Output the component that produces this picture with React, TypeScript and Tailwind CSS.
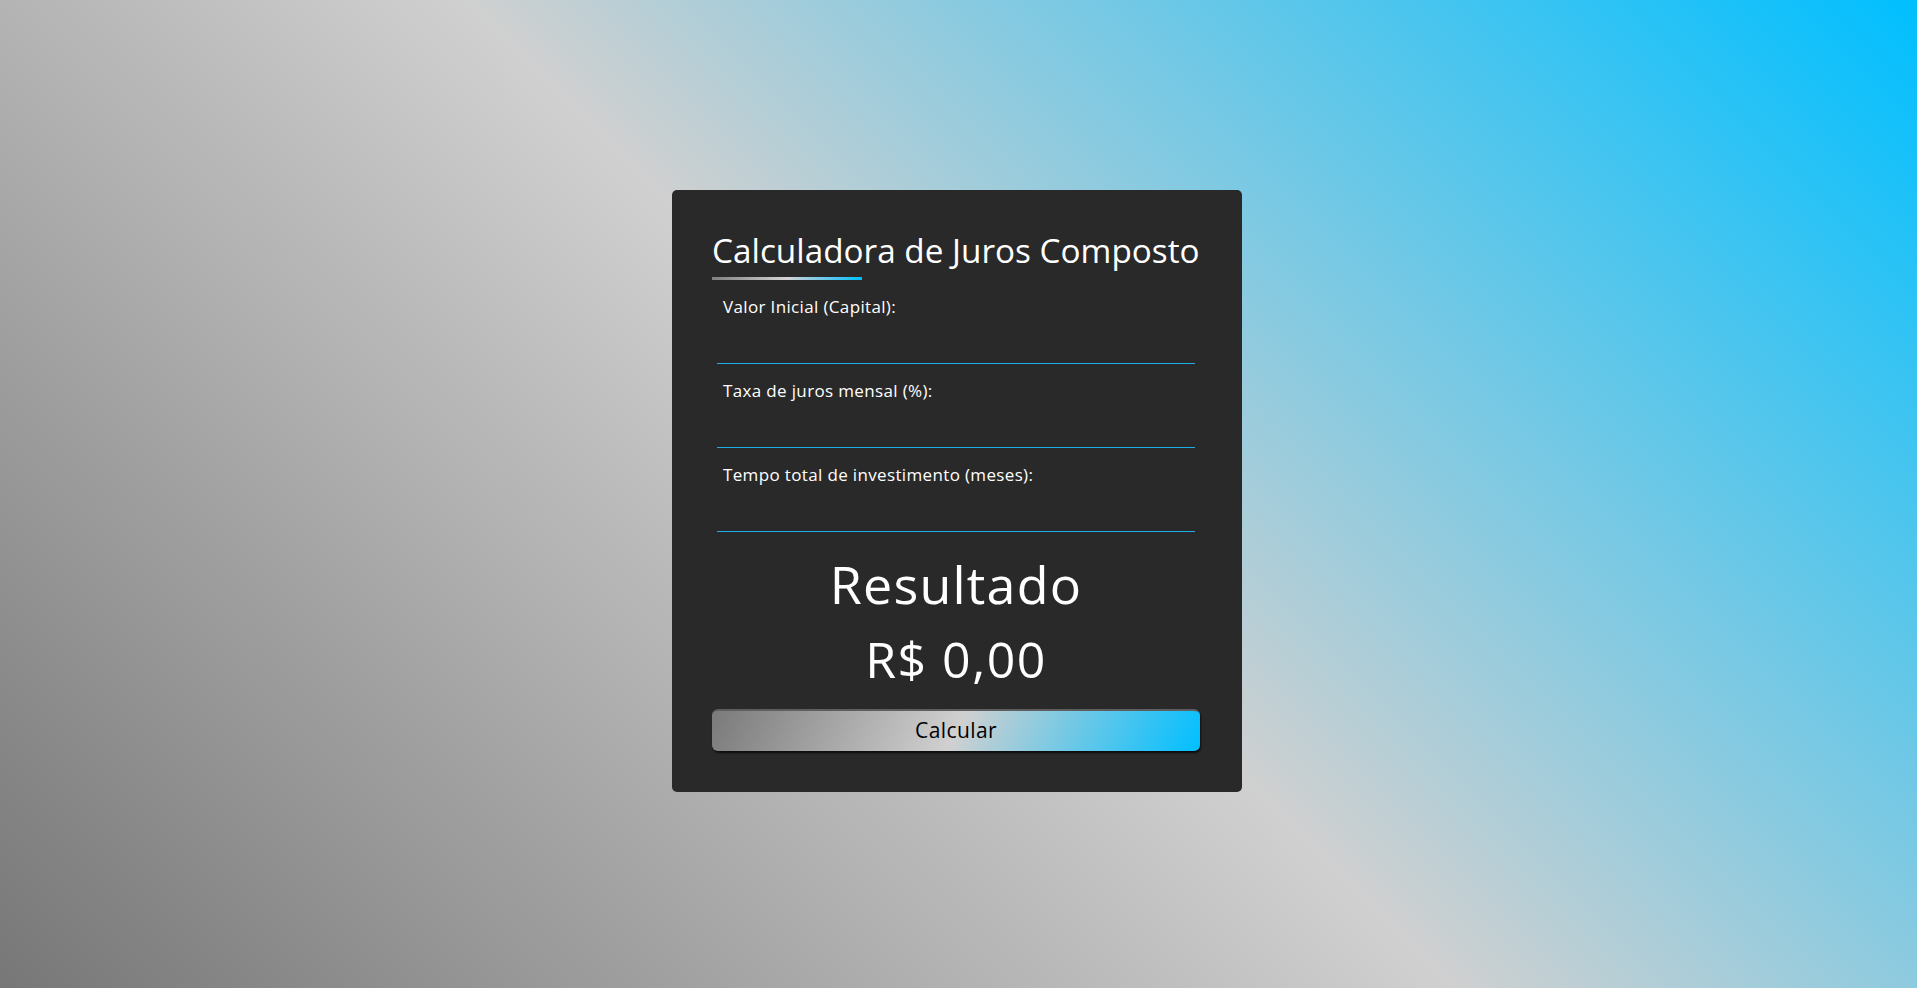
const fields = [
  { id: "capital", label: "Valor Inicial (Capital):" },
  { id: "taxa", label: "Taxa de juros mensal (%):" },
  { id: "tempo", label: "Tempo total de investimento (meses):" },
];

export default function App() {
  return (
    <div className="flex min-h-screen w-full items-center justify-center bg-[linear-gradient(45deg,#777777,#d0d0d0,#00bfff)] pr-[3px] pb-[6px] font-['Open_Sans',sans-serif]">
      <div className="flex w-[570px] flex-col rounded-[5px] bg-[#292929] pt-[40px] pr-[42px] pb-[41px] pl-10 text-white">
        <h1 className="text-[33.3px] leading-[40px] whitespace-nowrap">Calculadora de Juros Composto</h1>
        <div className="mt-[7px] h-[3px] w-[150px] bg-[linear-gradient(90deg,#808080,#d3d3d3,#00bfff)]" />

        <form className="flex flex-col" onSubmit={(e) => e.preventDefault()}>
          {fields.map((f) => (
            <div key={f.id} className="flex flex-col">
              <label htmlFor={f.id} className="mt-[15px] pl-[11px] text-[17px] leading-6 tracking-[0.35px]">
                {f.label}
              </label>
              <div className="mx-[5px] border-b border-solid border-[#1eaee6]">
                <input
                  id={f.id}
                  type="text"
                  inputMode="decimal"
                  className="block h-[44px] w-full bg-transparent text-white outline-none"
                />
              </div>
            </div>
          ))}
        </form>

        <h2 className="mt-[22px] text-center text-[52px] leading-[60px] font-medium tracking-[1.2px]">Resultado</h2>
        <p className="mt-[15px] text-center text-[50px] leading-[60px] tracking-[1.5px]">R$ 0,00</p>

        <button
          type="button"
          className="mt-[20px] h-[42px] w-[488px] rounded-[6px] border-t-2 border-[#5e5e5e] bg-[linear-gradient(115deg,#7a7a7a,#d0d0d0,#00bfff)] text-[21px] tracking-[0.4px] text-black shadow-[1px_2px_2px_rgba(0,0,0,0.7)]"
        >
          Calcular
        </button>
      </div>
    </div>
  );
}
